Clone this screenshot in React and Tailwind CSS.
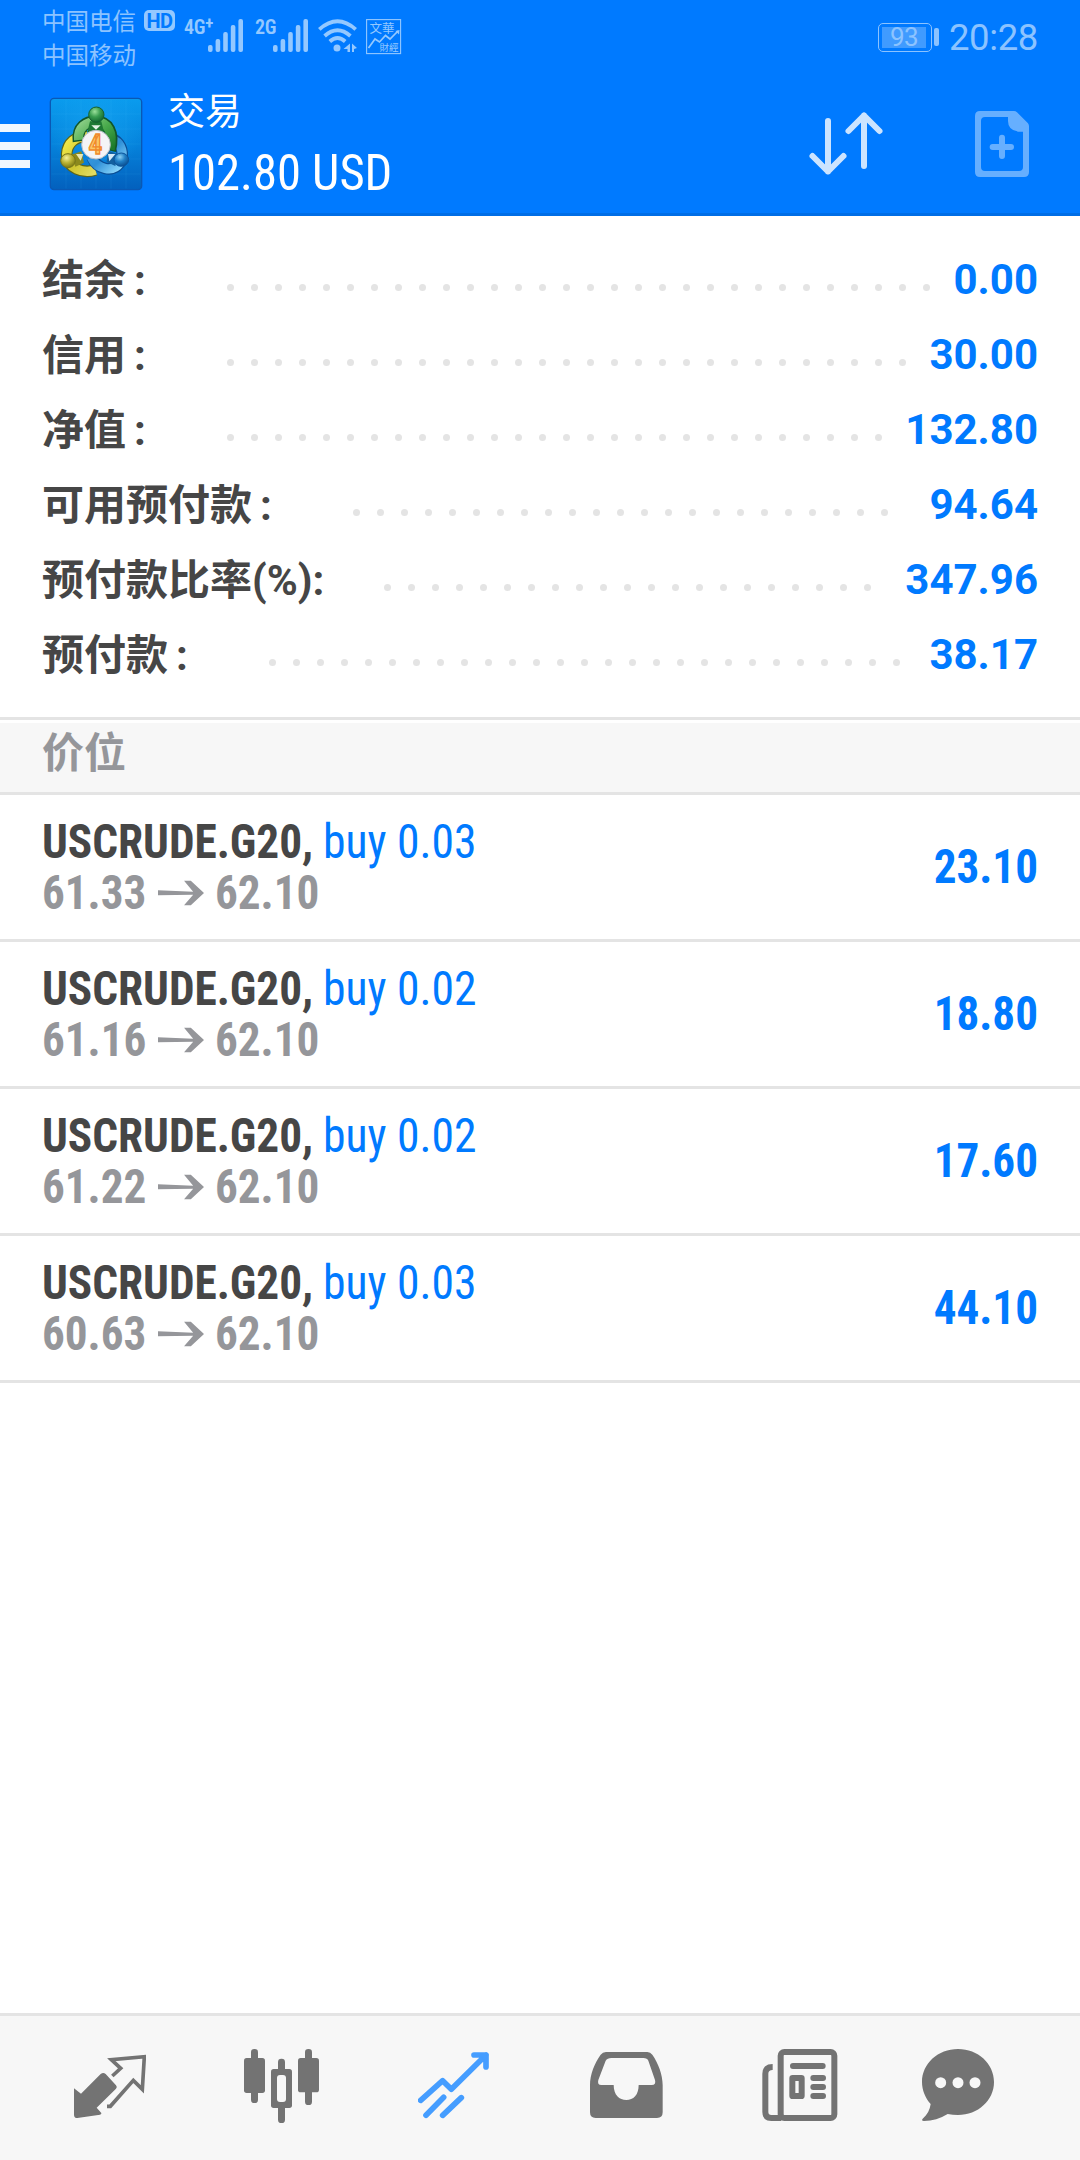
import React from "react";

const account = [
  { label: "结余", value: "0.00", dots: 30, width: "w-[185px]" },
  { label: "信用", value: "30.00", dots: 29, width: "w-[185px]" },
  { label: "净值", value: "132.80", dots: 28, width: "w-[185px]" },
  { label: "可用预付款", value: "94.64", dots: 23, width: "w-[311px]" },
  { label: "预付款比率(%):", value: "347.96", dots: 21, width: "w-[342px]" },
  { label: "预付款", value: "38.17", dots: 27, width: "w-[227px]" },
];

const positions = [
  { symbol: "USCRUDE.G20,", side: "buy 0.03", open: "61.33", current: "62.10", profit: "23.10" },
  { symbol: "USCRUDE.G20,", side: "buy 0.02", open: "61.16", current: "62.10", profit: "18.80" },
  { symbol: "USCRUDE.G20,", side: "buy 0.02", open: "61.22", current: "62.10", profit: "17.60" },
  { symbol: "USCRUDE.G20,", side: "buy 0.03", open: "60.63", current: "62.10", profit: "44.10" },
];

const SignalBars = () => (
  <svg className="w-[35px] h-[33px]" viewBox="0 0 35 33" fill="#94c8ff">
    <rect x="0" y="26" width="4.6" height="7" rx="2" />
    <rect x="7.6" y="20" width="4.6" height="13" rx="2" />
    <rect x="15.2" y="13" width="4.6" height="20" rx="2" />
    <rect x="22.8" y="6" width="4.6" height="27" rx="2" />
    <rect x="30.4" y="0" width="4.6" height="33" rx="2" />
  </svg>
);

const WifiIcon = () => (
  <svg className="w-[39px] h-[34px]" viewBox="318 19 39 34" fill="none" stroke="#94c8ff" strokeWidth="3.8">
    <path d="M319.3 29.3 Q337.5 13 355.7 29.3" />
    <path d="M324.6 36 Q337.5 24.5 350.4 36" />
    <path d="M329.8 41.5 Q337.5 34.5 345.2 41.5" />
    <circle cx="337" cy="48" r="3.5" fill="#94c8ff" stroke="none" />
    <path d="M350 43.5v8.500h-2.500v-3h-4z M352 43.500l5 4.500-3 1v3h-2z" fill="#94c8ff" stroke="none" />
  </svg>
);

const FinanceIcon = () => (
  <svg className="w-[36px] h-[36px]" viewBox="366 19 36 36" fill="#94c8ff">
    <rect x="366.6" y="19.6" width="34" height="34" fill="none" stroke="#94c8ff" strokeWidth="1.1" />
    <text x="369.5" y="32.500" fontSize="12.500" className="font-['Noto_Sans_CJK_TC',sans-serif]">文華</text>
    <text x="379.5" y="50.5" fontSize="9.500" className="font-['Noto_Sans_CJK_TC',sans-serif]">財經</text>
    <path d="M368.5 48l6.5-9 4.5 3 6-6.5 4.5 3.5 8-8" fill="none" stroke="#94c8ff" strokeWidth="1.7" />
    <path d="M399.5 30l-.5 4.5-3.5-3.5z" />
  </svg>
);

const StatusBar = () => (
  <div className="h-[74px] flex items-start pl-[42px] pr-[43px] text-[#8cc3ff]">
    <div className="w-[96px] pt-[3px] text-[23.5px] leading-[34px] font-['Noto_Sans_CJK_SC',sans-serif] whitespace-nowrap">
      <div>中国电信</div>
      <div>中国移动</div>
    </div>
    <div className="ml-[6px] mt-[10px] w-[31px] h-[21px] rounded-[5px] bg-[#94c8ff] text-[#007aff] text-[20px] leading-[22px] text-center font-bold tracking-[-0.5px]">
      HD
    </div>
    <div className="mt-[19px] ml-[9px] flex items-start text-[#94c8ff]">
      <span className="w-[24px] text-[20px] leading-[16px] font-semibold [font-stretch:75%] flex tracking-[-0.3px]">
        4G<span className="text-[17px] leading-[8px] font-bold">+</span>
      </span>
      <SignalBars />
      <span className="ml-[12px] w-[18px] text-[20px] leading-[16px] font-semibold [font-stretch:75%] tracking-[-0.3px]">2G</span>
      <SignalBars />
      <span className="ml-[10px]"><WifiIcon /></span>
      <span className="ml-[9px]"><FinanceIcon /></span>
    </div>
    <div className="ml-auto flex items-center mt-[19px] h-[36px]">
      <div className="w-[54px] h-[29px] rounded-[5px] border-[1.5px] border-[#8cc3ff] p-[3px] pr-[5px]">
        <div className="h-full bg-[#409bff] text-[26px] leading-[21px] text-center tracking-[-0.5px]">93</div>
      </div>
      <div className="ml-[2px] w-[5px] h-[18px] rounded-[2px] bg-[#8cc3ff]" />
      <div className="ml-[10px] mt-[1px] text-[36.5px] leading-[36px] tracking-[-0.4px] w-[88px] whitespace-nowrap">20:28</div>
    </div>
  </div>
);

const AppIcon = () => (
  <svg className="w-[94px] h-[94px]" viewBox="9 9 282 282">
    <defs>
      <linearGradient id="tile" x1="0" y1="0" x2="0" y2="1">
        <stop offset="0" stopColor="#0a9cee" />
        <stop offset="0.5" stopColor="#0583dc" />
        <stop offset="1" stopColor="#0360bd" />
      </linearGradient>
      <radialGradient id="tileGlow" cx="0.5" cy="0.35" r="0.5">
        <stop offset="0" stopColor="#19a5f2" stopOpacity="0.6" />
        <stop offset="1" stopColor="#19a5f2" stopOpacity="0" />
      </radialGradient>
      <linearGradient id="green" x1="0" y1="0" x2="1" y2="1">
        <stop offset="0" stopColor="#8fd08a" />
        <stop offset="0.5" stopColor="#4aab4c" />
        <stop offset="1" stopColor="#1c7a2a" />
      </linearGradient>
      <linearGradient id="yellow" x1="0" y1="0" x2="1" y2="1">
        <stop offset="0" stopColor="#f3ec4c" />
        <stop offset="0.55" stopColor="#cfc52f" />
        <stop offset="1" stopColor="#e2dc62" />
      </linearGradient>
      <linearGradient id="blue" x1="0" y1="0" x2="1" y2="1">
        <stop offset="0" stopColor="#3b9be0" />
        <stop offset="0.5" stopColor="#2f90d8" />
        <stop offset="1" stopColor="#8fdafd" />
      </linearGradient>
      <radialGradient id="greenHead" cx="0.4" cy="0.3" r="0.7">
        <stop offset="0" stopColor="#9be09a" />
        <stop offset="0.5" stopColor="#3a9d50" />
        <stop offset="1" stopColor="#146a30" />
      </radialGradient>
      <radialGradient id="yellowHead" cx="0.4" cy="0.3" r="0.7">
        <stop offset="0" stopColor="#f5f19a" />
        <stop offset="0.5" stopColor="#bdb537" />
        <stop offset="1" stopColor="#7d7a14" />
      </radialGradient>
      <radialGradient id="blueHead" cx="0.4" cy="0.3" r="0.7">
        <stop offset="0" stopColor="#8ad0f5" />
        <stop offset="0.5" stopColor="#2180c6" />
        <stop offset="1" stopColor="#0b4f92" />
      </radialGradient>
    </defs>
    <rect x="13" y="13" width="274" height="274" rx="11" fill="url(#tile)" stroke="#0a58b4" strokeWidth="4" />
    <rect x="15" y="15" width="270" height="270" rx="9" fill="url(#tileGlow)" />
    <path
      d="M60 16v268M105 16v268M150 16v268M195 16v268M240 16v268M16 60h268M16 105h268M16 150h268M16 195h268M16 240h268"
      stroke="#4fbcff"
      strokeOpacity="0.16"
      strokeWidth="2"
    />
    {/* three figures linked around the badge */}
    <path d="M148 228C112 240 64 224 62 180C64 146 90 126 122 128" fill="none" stroke="#5f6516" strokeWidth="35" />
    <path d="M148 228C112 240 64 224 62 180C64 146 90 126 122 128" fill="none" stroke="url(#yellow)" strokeWidth="28" />
    <path d="M138 190C154 226 200 238 222 206C236 178 226 150 204 136" fill="none" stroke="#0b4d94" strokeWidth="35" />
    <path d="M136 190C154 226 200 238 222 206C236 178 226 150 206 140" fill="none" stroke="url(#blue)" strokeWidth="28" />
    <path d="M98 142C92 98 122 82 150 82C186 84 206 114 192 170" fill="none" stroke="#12572a" strokeWidth="36" />
    <path d="M98 138C94 100 122 83 150 83C184 84 204 114 192 166" fill="none" stroke="url(#green)" strokeWidth="28" />
    <path d="M132 82l-8 32h50l-8-32z" fill="#1f7a33" />
    <path d="M136 94h28l-14 13z" fill="#e6f3e6" />
    <path d="M76 182l30-10 8 34-26 12z" fill="#8c891d" />
    <path d="M90 180h22l-8 20z" fill="#e9e6b0" />
    <path d="M216 180l-30-10-4 34 26 12z" fill="#13609f" />
    <path d="M208 180h-22l4 22z" fill="#d3e9f8" />
    <circle cx="151" cy="62" r="23" fill="url(#greenHead)" stroke="#17602f" strokeWidth="3" />
    <ellipse cx="66" cy="200" rx="22" ry="21" fill="url(#yellowHead)" stroke="#77751a" strokeWidth="3" />
    <ellipse cx="226" cy="197" rx="22" ry="20" fill="url(#blueHead)" stroke="#0d559b" strokeWidth="3" />
    <circle cx="150" cy="152" r="43" fill="#f4f4f6" stroke="#b9bdc4" strokeWidth="3" />
    <text
      x="148"
      y="181"
      textAnchor="middle"
      fontSize="82"
      fill="#fbc766"
      stroke="#f08a2c"
      strokeWidth="4"
      className="font-['Roboto',sans-serif] font-bold [font-stretch:85%]"
    >
      4
    </text>
  </svg>
);

const SortIcon = () => (
  <svg
    className="w-[76px] h-[66px]"
    viewBox="808 111 76 66"
    fill="none"
    stroke="#cce4ff"
    strokeWidth="6"
    strokeLinecap="round"
    strokeLinejoin="round"
  >
    <path d="M828 121v50.5M812.5 156l15.500 15.500 15.500-15.500" />
    <path d="M864 166v-50.5M848.5 131l15.500-15.500 15.500 15.500" />
  </svg>
);

const NewOrderIcon = () => (
  <svg className="w-[54px] h-[66px]" viewBox="585 333 162 198" fill="#66afff">
    <path
      fillRule="evenodd"
      d="M600 333h102q5 0 9 4l33 33q3 4 3 9v137q0 15-15 15H600q-15 0-15-15V348q0-15 15-15zM615 351q-12 0-12 12v138q0 12 12 12h102q12 0 12-12V395h-14q-31-4-31-32v-12z"
    />
    <path d="M666 413v55M638 441h55" stroke="#66afff" strokeWidth="18" strokeLinecap="round" />
  </svg>
);

const Toolbar = () => (
  <div className="h-[139px] flex items-center pr-[51px] text-white">
    <div className="w-[30px] flex flex-col gap-[10px] mt-[5px]">
      <span className="h-[8px] bg-[#f0f7ff]" />
      <span className="h-[8px] bg-[#f0f7ff]" />
      <span className="h-[8px] bg-[#f0f7ff]" />
    </div>
    <div className="ml-[19px]"><AppIcon /></div>
    <div className="ml-[25px] mt-[-2px] leading-[60px] whitespace-nowrap">
      <div className="text-[37px]">交易</div>
      <div className="text-[50px] [font-stretch:75%] origin-left scale-x-[0.973]">102.80 USD</div>
    </div>
    <div className="ml-auto"><SortIcon /></div>
    <div className="ml-[91px]"><NewOrderIcon /></div>
  </div>
);

const AccountRow = ({ label, value, dots, width }) => (
  <div className="h-[75px] flex items-center leading-[75px] font-bold text-[42px] whitespace-nowrap">
    <span className={`${width} shrink-0 pt-[2px] text-[#464646]`}>
      {label}
      {!label.endsWith(":") && <span className="ml-[8px]">:</span>}
    </span>
    <span className="flex gap-[17px] mt-[16px]">
      {Array.from({ length: dots }, (_, i) => (
        <span key={i} className="size-[7px] rounded-full bg-[#e4e4e4]" />
      ))}
    </span>
    <span className="ml-auto text-[#007aff]">{value}</span>
  </div>
);

const ArrowRight = () => (
  <svg className="w-[46px] h-[26px] mr-[11px]" viewBox="474 299 136 74" fill="#95969a">
    <path d="M474 328l104 4-27-32h20l39 36-39 36h-20l27-31-104 2z" />
  </svg>
);

const PositionRow = ({ symbol, side, open, current, profit }) => (
  <div className="h-[147px] border-b-[3px] border-[#e4e4e4] pl-[42px] pr-[42px] flex items-center justify-between text-[48px] leading-[51px] [font-stretch:75%] font-bold whitespace-nowrap">
    <div>
      <div className="flex text-[#464646]">
        <span className="w-[281px]">
          <span className="inline-block origin-left scale-x-[0.943]">{symbol}</span>
        </span>
        <span className="font-normal text-[#007aff] origin-left scale-x-[0.95]">{side}</span>
      </div>
      <div className="flex items-center text-[#95969a]">
        <span className="w-[116px]">
          <span className="inline-block origin-left scale-x-[0.94]">{open}</span>
        </span>
        <ArrowRight />
        <span className="origin-left scale-x-[0.94]">{current}</span>
      </div>
    </div>
    <span className="mt-[-2px] text-[#007aff] origin-right scale-x-[0.94]">{profit}</span>
  </div>
);

const BottomNav = () => (
  <nav className="h-[147px] border-t-[3px] border-[#e4e4e4] bg-[#f7f7f7] pl-[74px] pb-[6px] flex items-center gap-[98px] text-[#737373]">
    <svg className="w-[72px] h-[80px] shrink-0" viewBox="102 135 216 240" fill="currentColor">
      <path d="M102 265l21 16 59-59q8-6 15 0l31 34q5 5 0 10l-58 57 14 16q1 4-4 5l-68 10q-10 0-10-10z" />
      <path
        d="M217 228l25-23-28-26 99-9-6 98-27-27-69 78h-10"
        fill="none"
        stroke="currentColor"
        strokeWidth="11"
      />
    </svg>
    <svg className="w-[76px] h-[80px] shrink-0" viewBox="612 135 228 240" fill="currentColor">
      <rect x="633" y="147" width="21" height="162" rx="10" />
      <rect x="612" y="174" width="63" height="105" rx="8" />
      <rect x="795" y="147" width="21" height="168" rx="10" />
      <rect x="774" y="174" width="63" height="103" rx="8" />
      <rect x="714" y="176" width="21" height="50" rx="10" />
      <rect x="714" y="310" width="21" height="59" rx="10" />
      <rect x="693" y="207" width="63" height="117" rx="8" />
      <rect x="711" y="225" width="27" height="81" rx="9" fill="#f7f7f7" />
    </svg>
    <svg
      className="w-[74px] h-[80px] shrink-0 text-[#459dff]"
      viewBox="1134 135 222 240"
      fill="none"
      stroke="currentColor"
      strokeWidth="17"
      strokeLinejoin="round"
      strokeLinecap="round"
    >
      <path d="M1142 301l66-59 26 26 104-103M1302 165h36v36" />
      <path d="M1338 165l-20 0 20 20z" fill="currentColor" strokeWidth="4" />
      <path d="M1158 346l53-54M1208 346l56-53" />
    </svg>
    <svg className="w-[74px] h-[80px] shrink-0" viewBox="150 135 222 240" fill="currentColor">
      <path
        fillRule="evenodd"
        d="M198 156h124q9 0 15 8c18 26 31 60 31 91v82q0 17-17 17H167q-17 0-17-17v-82c0-31 14-67 32-91q6-8 16-8zM214 174q-12 0-17 8l-22 58q-4 15 9 15h37c0 30 17 45 38 45s37-15 37-45h39q14 0 10-15l-20-58q-3-8-15-8z"
      />
    </svg>
    <svg className="w-[76px] h-[80px] shrink-0" viewBox="666 135 228 240" fill="none" stroke="currentColor" strokeWidth="18">
      <rect x="722" y="156" width="161" height="198" rx="11" />
      <path d="M698 201q-22 0-22 20v115q0 18 18 18h30" />
      <path d="M759 198h89M820 234h29M820 261h29M820 288h29" strokeLinecap="round" />
      <rect x="757" y="234" width="28" height="54" rx="1" strokeLinejoin="round" />
    </svg>
    <svg className="w-[72px] h-[80px] shrink-0 ml-[-14px]" viewBox="1146 135 216 240" fill="currentColor">
      <path d="M1254 147c60 0 108 44 108 99s-48 99-108 99q-16 0-31-3c-22 14-46 21-71 21q-9-1-4-7c14-12 22-27 24-44-16-18-26-41-26-66 0-55 48-99 108-99z" />
      <g fill="#f7f7f7">
        <circle cx="1202" cy="248" r="16.5" />
        <circle cx="1254" cy="248" r="16.5" />
        <circle cx="1305" cy="248" r="16.5" />
      </g>
    </svg>
  </nav>
);

const App = () => (
  <div className="w-[1080px] h-[2160px] flex flex-col bg-white overflow-hidden font-['Roboto','Noto_Sans_CJK_SC',sans-serif]">
    <header className="h-[216px] bg-[#007aff] border-b-[3px] border-[#006ee6]">
      <StatusBar />
      <Toolbar />
    </header>

    <section className="h-[504px] pt-[26px] px-[42px] border-b-[3px] border-[#e4e4e4]">
      {account.map((row) => (
        <AccountRow key={row.label} {...row} />
      ))}
    </section>

    <h2 className="mt-[3px] h-[72px] px-[42px] bg-[#f7f7f7] border-b-[3px] border-[#e4e4e4] text-[42px] leading-[62px] font-bold text-[#95969a]">
      价位
    </h2>

    <main className="flex-1">
      {positions.map((position, i) => (
        <PositionRow key={i} {...position} />
      ))}
    </main>

    <BottomNav />
  </div>
);

export default App;
